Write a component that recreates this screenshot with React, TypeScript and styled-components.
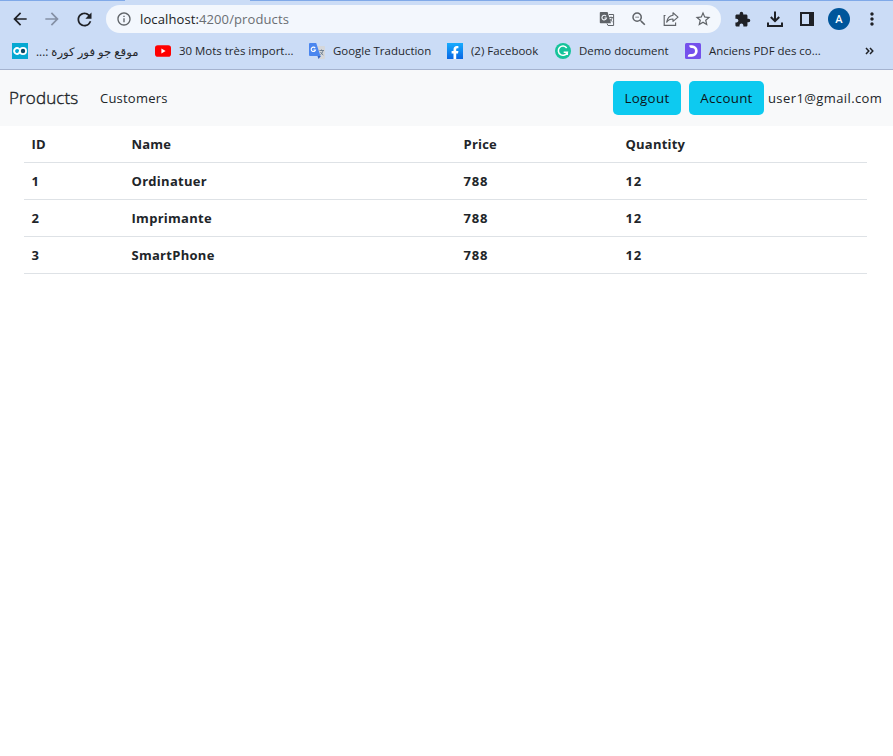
import React from "react";
import styled, { createGlobalStyle } from "styled-components";
import {
  MdArrowBack,
  MdArrowForward,
  MdRefresh,
  MdOutlineInfo,
  MdStarBorder,
  MdExtension,
  MdMoreVert,
  MdZoomOut,
} from "react-icons/md";

const GlobalStyle = createGlobalStyle`
  * { box-sizing: border-box; }
  html, body { margin: 0; padding: 0; background: #fff; }
  body { font-family: "Open Sans", "Noto Sans", sans-serif; color: #212529; overflow: hidden; }
  svg { display: block; flex: none; }
`;

const Page = styled.div`
  width: 893px;
  height: 756px;
  background: #fff;
`;

const Chrome = styled.header`
  height: 70px;
  background: #cbdcf6;
  border-bottom: 1px solid #a5b3cf;
`;

const TabEdge = styled.div`
  height: 1px;
  background: linear-gradient(
    to right,
    #80a9e8 0 125px,
    #cbdcf6 125px 250px,
    #80a9e8 250px
  );
`;

const Toolbar = styled.div`
  display: flex;
  align-items: center;
  height: 36px;
  padding-left: 10px;
`;

const ToolButton = styled.button<{ $width?: number; $muted?: boolean }>`
  display: flex;
  align-items: center;
  justify-content: center;
  width: ${(p) => p.$width ?? 32}px;
  height: 28px;
  padding: 0;
  border: 0;
  background: none;
  color: ${(p) => (p.$muted ? "#8590a5" : "#1f2126")};
`;

const Omnibox = styled.div`
  display: flex;
  align-items: center;
  width: 615px;
  height: 28px;
  margin-left: 12px;
  margin-right: 5px;
  padding-left: 10px;
  padding-right: 2px;
  border-radius: 14px;
  background: #f3f7fd;
  color: #5f6368;
`;

const Url = styled.span`
  flex: 1;
  margin-left: 8px;
  font-size: 13px;
  line-height: 20px;
  letter-spacing: 0.11px;
  color: #6a6e73;
  white-space: nowrap;
`;

const Host = styled.span`
  color: #202124;
`;

const OmniAction = styled.span`
  display: flex;
  justify-content: center;
  width: 32px;
`;

const Avatar = styled.span`
  display: flex;
  align-items: center;
  justify-content: center;
  width: 22px;
  height: 22px;
  border-radius: 50%;
  background: #00569b;
  color: #fff;
  font: 500 11px Roboto, sans-serif;
`;

const BookmarkBar = styled.nav`
  display: flex;
  align-items: center;
  height: 28px;
  padding-left: 12px;
`;

const Bookmark = styled.a<{ $width: number }>`
  display: flex;
  align-items: center;
  gap: 8px;
  width: ${(p) => p.$width}px;
  color: #24272c;
`;

const BookmarkText = styled.span<{ $rtl?: boolean }>`
  direction: ${(p) => (p.$rtl ? "rtl" : "ltr")};
  font-family: "Open Sans", "DejaVu Sans", sans-serif;
  font-size: ${(p) => (p.$rtl ? 11.7 : 11.45)}px;
  line-height: 16px;
  white-space: nowrap;
`;

const NavBar = styled.nav`
  display: flex;
  align-items: center;
  height: 56px;
  padding: 0 11px 0 9px;
  background: #f8f9fa;
`;

const Brand = styled.a`
  width: 91px;
  font-size: 17px;
  line-height: 26px;
  font-weight: 300;
  letter-spacing: 0.12px;
  -webkit-text-stroke: 0.4px #212529;
`;

const NavLink = styled.a`
  flex: 1;
  font-size: 13px;
  line-height: 20px;
  letter-spacing: 0.22px;
`;

const InfoButton = styled.button<{ $width: number }>`
  width: ${(p) => p.$width}px;
  height: 34px;
  margin-right: ${(p) => (p.$width === 68 ? 8 : 4)}px;
  padding: 0;
  border: 0;
  border-radius: 5px;
  background: #0dcaf0;
  color: #0b1418;
  font-family: inherit;
  font-size: 13.3px;
  line-height: 20px;
  letter-spacing: 0.3px;
`;

const UserEmail = styled.span`
  width: 114px;
  font-size: 13px;
  line-height: 20px;
  letter-spacing: 0.4px;
  white-space: nowrap;
`;

const Table = styled.table`
  width: 843px;
  margin-left: 24px;
  border-collapse: separate;
  border-spacing: 0;
  table-layout: fixed;
  font-size: 13px;
  letter-spacing: 0.22px;
`;

const HeadCell = styled.th<{ $width?: number }>`
  width: ${(p) => (p.$width ? `${p.$width}px` : "auto")};
  height: 37px;
  padding: 0 7.5px;
  border-bottom: 1px solid #dee2e6;
  text-align: left;
  font-weight: 700;
  line-height: 20px;
  vertical-align: middle;
`;

const BodyCell = styled(HeadCell)<{ $spacing?: number }>`
  letter-spacing: ${(p) => p.$spacing ?? 0.22}px;
`;

const TranslateIcon = () => (
  <svg width="16" height="16" viewBox="0 0 16 16">
    <path d="M1.6 1h7l3.4 11.3H1.6A.8.8 0 0 1 .8 11.500V1.800A.8.8 0 0 1 1.600 1z" fill="#5f6368" />
    <path d="M10 3.500h4.600v11H9L8 12.500" fill="none" stroke="#5f6368" strokeWidth="1" />
    <path d="M7.100 5.200A2.300 2.300 0 1 0 7.500 7H5.400" fill="none" stroke="#f3f7fd" strokeWidth="1.100" />
    <path d="M10.200 6.500h4M12 5.500v1M13.300 6.500c-.3 1.800-1.300 3-2.300 4M11 8c.7 1.300 1.500 2 2.500 2.800" fill="none" stroke="#5f6368" strokeWidth=".9" />
  </svg>
);

const ShareIcon = () => (
  <svg width="16" height="16" viewBox="0 0 16 16" fill="none" stroke="#5f6368" strokeWidth="1.150">
    <path d="M2.500 4.500H1.200v9.900h11.400V11.500" />
    <path d="M10 1.800l5 4.300-5 4.300V8C7 8 5 9 3.700 11.200 4.200 7.500 6.300 4.700 10 4.200z" strokeLinejoin="round" />
  </svg>
);

const DownloadIcon = () => (
  <svg width="18" height="18" viewBox="0 0 18 18" fill="none" stroke="#1f2126" strokeWidth="2">
    <path d="M9 1.500v9M4.800 7L9 11.200 13.200 7" />
    <path d="M2 12.500V16h14v-3.500" />
  </svg>
);

const SidePanelIcon = () => (
  <svg width="14" height="14" viewBox="0 0 14 14">
    <path d="M1 1h12v12H1z" fill="none" stroke="#1f2126" strokeWidth="2" />
    <path d="M9 1h4v12H9z" fill="#1f2126" />
  </svg>
);

const GoFourIcon = () => (
  <svg width="16" height="16" viewBox="0 0 16 16">
    <path d="M0 0h16v16H0z" fill="#05a8d2" />
    <path d="M7.300 6.200A2.900 2.900 0 1 0 7.300 9.800C8 9 7.900 7 8.700 6.200" fill="none" stroke="#fff" strokeWidth="2" />
    <circle cx="11" cy="8" r="3.100" fill="#0c4864" stroke="#fff" strokeWidth="1.800" />
  </svg>
);

const VideoIcon = () => (
  <svg width="16" height="16" viewBox="0 0 16 16">
    <rect y="2.300" width="16" height="11.400" rx="2.800" fill="#f00" />
    <path d="M6.400 5.600v4.800L10.600 8z" fill="#fff" />
  </svg>
);

const GoogleTranslateIcon = () => (
  <svg width="16" height="16" viewBox="0 0 16 16">
    <path d="M6 3h9a1 1 0 0 1 1 1v11a1 1 0 0 1-1 1H9.500z" fill="#d5d7da" />
    <path d="M8.500 13h3.500L9.500 16z" fill="#3366c8" />
    <path d="M1 0h6.200L11.500 13H1a1 1 0 0 1-1-1V1a1 1 0 0 1 1-1z" fill="#4a86ef" />
    <path d="M6.200 5.100A2.200 2.200 0 1 0 6.500 7H4.400" fill="none" stroke="#fff" strokeWidth="1.100" />
    <path d="M10.500 7.500H15M12.500 6.500v1M14 7.500c-.4 2-1.500 3.300-2.500 4.200M11.500 9c.7 1.300 1.700 2.300 2.800 3" fill="none" stroke="#66798c" strokeWidth=".9" />
  </svg>
);

const FacebookIcon = () => (
  <svg width="16" height="16" viewBox="0 0 16 16">
    <defs>
      <linearGradient id="fb" x2="0" y2="1">
        <stop stopColor="#18acfe" />
        <stop offset="1" stopColor="#0866e4" />
      </linearGradient>
    </defs>
    <path d="M0 0h16v16H0z" fill="url(#fb)" />
    <path d="M6.500 16v-5.500H4.600V8h1.900V6.700c0-2.400 1.300-3.600 3.300-3.600.8 0 1.600.1 1.600.1v2.100h-1c-.9 0-1.200.6-1.200 1.200V8h2.200l-.4 2.500H9.200V16z" fill="#fff" />
  </svg>
);

const GrammarIcon = () => (
  <svg width="16" height="16" viewBox="0 0 16 16">
    <circle cx="8" cy="8" r="8" fill="#15c39a" />
    <path d="M11.700 5A4.600 4.600 0 1 0 12.300 9.200H8.700M12.300 9v3" fill="none" stroke="#fff" strokeWidth="1.500" />
  </svg>
);

const PdfIcon = () => (
  <svg width="16" height="16" viewBox="0 0 16 16">
    <rect width="16" height="16" rx="1.500" fill="#7450ec" />
    <path d="M4.300 2.300H7a5.700 5.700 0 0 1 0 11.400H2.800c0-1.700 1-2.700 2.700-2.700H7a3 3 0 0 0 0-6H6.500C5 5 4.300 4 4.300 2.300z" fill="#fff" />
  </svg>
);

const OverflowIcon = () => (
  <svg width="9" height="8" viewBox="0 0 9 8" fill="none" stroke="#1f2126" strokeWidth="1.500">
    <path d="M1 1l2.800 3L1 7M5 1l2.800 3L5 7" />
  </svg>
);

const bookmarks = [
  { icon: <GoFourIcon />, title: "موقع جو فور كورة :...", width: 143, rtl: true },
  { icon: <VideoIcon />, title: "30 Mots très import...", width: 154 },
  { icon: <GoogleTranslateIcon />, title: "Google Traduction", width: 138 },
  { icon: <FacebookIcon />, title: "(2) Facebook", width: 108 },
  { icon: <GrammarIcon />, title: "Demo document", width: 130 },
  { icon: <PdfIcon />, title: "Anciens PDF des co...", width: 180 },
];

const products = [
  { id: 1, name: "Ordinatuer", price: 788, quantity: 12 },
  { id: 2, name: "Imprimante", price: 788, quantity: 12 },
  { id: 3, name: "SmartPhone", price: 788, quantity: 12 },
];

export default function App() {
  return (
    <Page>
      <GlobalStyle />
      <Chrome>
        <TabEdge />
        <Toolbar>
          <ToolButton $width={20}><MdArrowBack size={20} /></ToolButton>
          <ToolButton $width={44} $muted><MdArrowForward size={20} /></ToolButton>
          <ToolButton $width={20}><MdRefresh size={21} /></ToolButton>
          <Omnibox>
            <MdOutlineInfo size={16} />
            <Url><Host>localhost:</Host>4200/products</Url>
            <OmniAction><TranslateIcon /></OmniAction>
            <OmniAction><MdZoomOut size={18} /></OmniAction>
            <OmniAction><ShareIcon /></OmniAction>
            <OmniAction><MdStarBorder size={18} /></OmniAction>
          </Omnibox>
          <ToolButton><MdExtension size={17} /></ToolButton>
          <ToolButton $width={34}><DownloadIcon /></ToolButton>
          <ToolButton $width={30}><SidePanelIcon /></ToolButton>
          <ToolButton $width={34}><Avatar>A</Avatar></ToolButton>
          <ToolButton><MdMoreVert size={20} /></ToolButton>
        </Toolbar>
        <BookmarkBar>
          {bookmarks.map((b) => (
            <Bookmark key={b.title} $width={b.width}>
              {b.icon}
              <BookmarkText $rtl={b.rtl}>{b.title}</BookmarkText>
            </Bookmark>
          ))}
          <OverflowIcon />
        </BookmarkBar>
      </Chrome>
      <NavBar>
        <Brand>Products</Brand>
        <NavLink>Customers</NavLink>
        <InfoButton $width={68}>Logout</InfoButton>
        <InfoButton $width={75}>Account</InfoButton>
        <UserEmail>user1@gmail.com</UserEmail>
      </NavBar>
      <Table>
        <thead>
          <tr>
            <HeadCell $width={100}>ID</HeadCell>
            <HeadCell $width={332}>Name</HeadCell>
            <HeadCell $width={162}>Price</HeadCell>
            <HeadCell>Quantity</HeadCell>
          </tr>
        </thead>
        <tbody>
          {products.map((p) => (
            <tr key={p.id}>
              <BodyCell>{p.id}</BodyCell>
              <BodyCell $spacing={0.28}>{p.name}</BodyCell>
              <BodyCell $spacing={0.8}>{p.price}</BodyCell>
              <BodyCell $spacing={0.8}>{p.quantity}</BodyCell>
            </tr>
          ))}
        </tbody>
      </Table>
    </Page>
  );
}
